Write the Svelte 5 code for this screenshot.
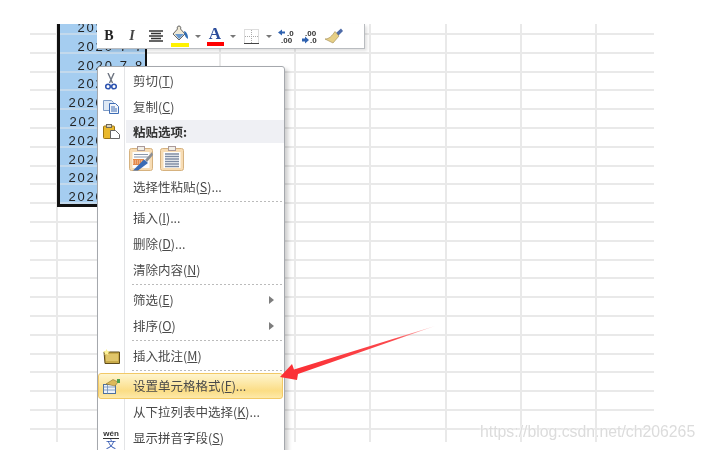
<script>
  const colWidths = [28, 88, 75, 75, 75, 76, 75, 75, 57];
  const rowHeights = [11, ...Array(21).fill(18.81), 12];
  const dates = ["2020-7-6", "2020-7-7", "2020-7-8", "2020-7-9", "2020-7-10", "2020-7-11", "2020-7-12", "2020-7-13", "2020-7-14", "2020-7-15"];
  const cells = [];
  rowHeights.forEach((_, r) => {
    colWidths.forEach((_, c) => {
      cells.push({
        key: r + "-" + c,
        text: c === 1 && r < 10 ? dates[r] : "",
        selected: c === 1 && r < 10,
        lastCol: c === colWidths.length - 1,
        lastRow: r === rowHeights.length - 1
      });
    });
  });
  const gridCols = colWidths.map((w) => w + "px").join(" ");
  const gridRows = rowHeights.map((h) => h + "px").join(" ");
</script>

<div class="page">
  <div class="sheet" style="grid-template-columns: {gridCols}; grid-template-rows: {gridRows}">
    {#each cells as cell (cell.key)}
      <div class="cell" class:selected={cell.selected} class:last-col={cell.lastCol} class:last-row={cell.lastRow}>
        {#if cell.text}<span>{cell.text}</span>{/if}
      </div>
    {/each}
    <div class="selection"></div>
  </div>

  <div class="toolbar">
    <span class="tool bold" style="width:24px">B</span>
    <span class="tool ital" style="width:22px">I</span>
    <span class="tool" style="width:25px">
      <svg width="16" height="13" viewBox="0 0 16 13"><path d="M1 1h14M3 3.500h10M1 6h14M3 8.500h10M1 11h14" stroke="#333" stroke-width="1.300" fill="none"/></svg>
    </span>
    <span class="tool" style="width:24px">
      <svg width="18" height="22" viewBox="0 0 18 22"><path d="M8 1 C6 1 6 3 6.500 4 L2 9 L8 15 L14 9 L9.500 4 C10 3 10 1 8 1z" fill="#efe9d6" stroke="#666"/><path d="M13 6c3 1 4 4 4 8-2-1-3-3-3.500-5z" fill="#2f6db5"/><path d="M4 9h9l-5 5z" fill="#6b9bd1"/><rect x="0" y="18" width="18" height="4" fill="#fff200"/></svg>
    </span>
    <span class="caret" style="width:12px"></span>
    <span class="tool font-a" style="width:22px">
      <span class="a">A</span><span class="bar"></span>
    </span>
    <span class="caret" style="width:13px"></span>
    <span class="tool" style="width:24px">
      <svg width="15" height="15" viewBox="0 0 15 15"><path d="M.5.5h14v14H.5z" fill="none" stroke="#bbb" stroke-dasharray="1 1"/><path d="M7.500 1v13M1 7.500h13" stroke="#aaa" stroke-dasharray="1 1"/><path d="M0 14.500h15" stroke="#444"/></svg>
    </span>
    <span class="caret" style="width:12px"></span>
    <span class="tool" style="width:22px">
      <svg width="17" height="15" viewBox="0 0 17 15"><path d="M0 3.500 L4 .5V2.500H7V4.500H4V6.500z" fill="#2f62b0"/><text x="9" y="6.500" class="num">.0</text><text x="3" y="14" class="num">.00</text></svg>
    </span>
    <span class="tool" style="width:24px">
      <svg width="17" height="15" viewBox="0 0 17 15"><text x="4" y="6.500" class="num">.00</text><path d="M1 9.500H4V7.500L8 11 4 14.500V12.500H1z" fill="#2f62b0"/><text x="9" y="14" class="num">.0</text></svg>
    </span>
    <span class="tool" style="width:24px">
      <svg width="19" height="16" viewBox="0 0 19 16"><path d="M12 5 L17 0.500 L19 3 L14 8z" fill="#4f6ca8"/><path d="M11 3.500 L15 8 L9 15 L1 11 C5 11 8 8 11 3.500z" fill="#e6cf86" stroke="#a08a50" stroke-width=".6"/></svg>
    </span>
  </div>

  <div class="menu">
    <div class="item">
      <span class="ico">
        <svg width="12" height="17" viewBox="0 0 12 17"><path d="M3 0 L7.500 10M9 0 L4.500 10" stroke="#6d7480" stroke-width="1.400" fill="none"/><circle cx="3" cy="13.500" r="2.300" fill="none" stroke="#2f55b0" stroke-width="1.600"/><circle cx="9" cy="13.500" r="2.300" fill="none" stroke="#2f55b0" stroke-width="1.600"/></svg>
      </span>
      <span class="label">剪切(<u>T</u>)</span>
    </div>
    <div class="item">
      <span class="ico">
        <svg width="16" height="14" viewBox="0 0 16 14"><path d="M.5.5h8l2 2v8H.5z" fill="#dfe9f5" stroke="#7f9cc6"/><path d="M6.500 3.500h6l3 3v7h-9z" fill="#f2f6fb" stroke="#3f6db5"/><path d="M8 7h4M8 9h6M8 11h6" stroke="#3f6db5"/></svg>
      </span>
      <span class="label">复制(<u>C</u>)</span>
    </div>
    <div class="item head">
      <span class="ico">
        <svg width="17" height="15" viewBox="0 0 17 15"><rect x=".5" y="2" width="11" height="12.500" rx="1" fill="#eab92d" stroke="#9b7414"/><rect x="3.500" y=".5" width="5" height="3" fill="#d9d2bd" stroke="#6f6a5a"/><path d="M7.500 6.500h5l4 4v4h-9z" fill="#fff" stroke="#666"/></svg>
      </span>
      <span class="label strong">粘贴选项:</span>
    </div>
    <div class="paste-row">
      <span class="paste">
        <svg width="24" height="25" viewBox="0 0 24 25"><rect x=".5" y="2.500" width="23" height="22" rx="2" fill="#f7dcb4" stroke="#d6b27f"/><rect x="8.500" y=".5" width="7" height="4" fill="#f1efe7" stroke="#a99"/><rect x="3.500" y="6" width="17" height="16" fill="#fdfdfd"/><path d="M5 8.500h14M5 11h14" stroke="#8a97ab"/><path d="M4 13h11v6H4z" fill="#e58a4a"/><path d="M4 15h11M4 17h11" stroke="#f7d6bc" stroke-dasharray="1 1"/><path d="M23 6 L16 14 L18 16 L24 9z" fill="#8b8f96"/><path d="M15 13.500 L19 17 L9 24.500 L4 24.500z" fill="#3b6cb5"/></svg>
      </span>
      <span class="paste">
        <svg width="24" height="25" viewBox="0 0 24 25"><rect x=".5" y="2.500" width="23" height="22" rx="2" fill="#f7dcb4" stroke="#d6b27f"/><rect x="8.500" y=".5" width="7" height="4" fill="#f1efe7" stroke="#a99"/><rect x="3.500" y="6" width="17" height="16" fill="#fdfdfd"/><path d="M5 8h14M5 10.500h14M5 13h14M5 15.500h14M5 18h14M5 20.500h14" stroke="#7d8ba3" stroke-width="1.300"/></svg>
      </span>
    </div>
    <div class="item">
      <span class="ico"></span>
      <span class="label">选择性粘贴(<u>S</u>)...</span>
    </div>
    <div class="sep first"></div>
    <div class="item">
      <span class="ico"></span>
      <span class="label">插入(<u>I</u>)...</span>
    </div>
    <div class="item">
      <span class="ico"></span>
      <span class="label">删除(<u>D</u>)...</span>
    </div>
    <div class="item">
      <span class="ico"></span>
      <span class="label">清除内容(<u>N</u>)</span>
    </div>
    <div class="sep"></div>
    <div class="item">
      <span class="ico"></span>
      <span class="label">筛选(<u>E</u>)</span>
      <span class="more"></span>
    </div>
    <div class="item">
      <span class="ico"></span>
      <span class="label">排序(<u>O</u>)</span>
      <span class="more"></span>
    </div>
    <div class="sep"></div>
    <div class="item">
      <span class="ico">
        <svg width="17" height="15" viewBox="0 0 17 15"><path d="M1 3h15.500v11.500H2z" fill="#c9ab4a" stroke="#5f4c1c"/><path d="M3 5h12v7H3z" fill="#e0c56a"/><path d="M3.500 0 L4.500 2 L7 2.500 L5 4 L5.500 6 L3.500 5 L1.500 6 L2 4 L0 2.500 L2.500 2z" fill="#fdf39a"/></svg>
      </span>
      <span class="label">插入批注(<u>M</u>)</span>
    </div>
    <div class="sep"></div>
    <div class="item active">
      <span class="ico">
        <svg width="17" height="15" viewBox="0 0 17 15"><rect x=".5" y="5.500" width="12" height="9" fill="#eef3fa" stroke="#4d6f9e"/><path d="M.5 8h12M.5 11h12M4.500 5.500v9" stroke="#6d8db8" stroke-width=".8"/><path d="M3 5 L10 .5 L15 3 L12 7z" fill="#dcb95a" stroke="#8a7330" stroke-width=".6"/><path d="M14 0h3v4h-3z" fill="#4ca04c"/></svg>
      </span>
      <span class="label">设置单元格格式(<u>F</u>)...</span>
    </div>
    <div class="item">
      <span class="ico"></span>
      <span class="label">从下拉列表中选择(<u>K</u>)...</span>
    </div>
    <div class="item">
      <span class="ico wen"><b>wén</b><i>文</i></span>
      <span class="label">显示拼音字段(<u>S</u>)</span>
    </div>
  </div>

  <svg class="arrow" width="160" height="60" viewBox="280 325 160 60">
    <defs>
      <linearGradient id="tail" gradientUnits="userSpaceOnUse" x1="300" y1="370" x2="435" y2="326">
        <stop offset="0" stop-color="#fb3036"/>
        <stop offset="0.7" stop-color="#fb4a4e"/>
        <stop offset="1" stop-color="#fdd5d5"/>
      </linearGradient>
    </defs>
    <path d="M280 377 L292 364 L294 369.500 L435 326 L298 374 L297 380z" fill="url(#tail)"/>
  </svg>

  <div class="mark">https://blog.csdn.net/ch206265</div>
</div>

<style>
  :global(body) {
    background: #fff;
  }

  .page {
    position: relative;
    width: 704px;
    height: 450px;
    box-sizing: border-box;
    padding: 24px 0 0 30px;
    overflow: hidden;
    background: #fff;
    filter: blur(0.45px);
    font-family: "Noto Sans CJK SC", "Liberation Sans", sans-serif;
  }

  .sheet {
    position: relative;
    display: grid;
    width: 624px;
    height: 419px;
    overflow: hidden;
  }

  .cell {
    box-sizing: border-box;
    border-right: 2px solid #e9e9e9;
    border-bottom: 2px solid #e9e9e9;
    display: flex;
    align-items: flex-end;
    justify-content: flex-end;
    overflow: hidden;
  }

  .cell.last-col {
    border-right: none;
  }

  .cell.last-row {
    border-bottom: none;
  }

  .cell.selected {
    background: #a5cdf0;
    border-bottom-color: #c3d9ec;
    border-right: none;
  }

  .cell span {
    font-family: "Liberation Sans", sans-serif;
    font-size: 13px;
    line-height: 13px;
    margin-bottom: -1px;
    letter-spacing: 1.8px;
    color: #222;
    padding-right: 2px;
    white-space: nowrap;
  }

  .selection {
    position: absolute;
    left: 27px;
    top: -8px;
    width: 90px;
    height: 191px;
    box-sizing: border-box;
    border-left: 3px solid #111;
    border-right: 2px solid #111;
    border-bottom: 3px solid #111;
  }

  .toolbar {
    position: absolute;
    left: 97px;
    top: 24px;
    width: 268px;
    height: 25px;
    display: flex;
    align-items: center;
    background: #fff;
    border-right: 1px solid #b9bcc0;
    border-bottom: 1px solid #b9bcc0;
    box-sizing: border-box;
    box-shadow: 2px 2px 3px rgba(0, 0, 0, 0.12);
  }

  .tool {
    display: flex;
    align-items: center;
    justify-content: center;
    flex: none;
    height: 24px;
  }

  .bold {
    font-family: "Liberation Serif", serif;
    font-weight: bold;
    font-size: 14px;
    color: #222;
  }

  .ital {
    font-family: "Liberation Serif", serif;
    font-weight: bold;
    font-style: italic;
    font-size: 14px;
    color: #444;
  }

  .font-a {
    flex-direction: column;
  }

  .font-a .a {
    font-family: "Liberation Serif", serif;
    font-weight: bold;
    font-size: 17px;
    line-height: 16px;
    color: #2b4c9b;
  }

  .font-a .bar {
    width: 17px;
    height: 4px;
    background: #f00;
  }

  .caret {
    flex: none;
    display: flex;
    justify-content: center;
  }

  .caret::before {
    content: "";
    border-left: 3px solid transparent;
    border-right: 3px solid transparent;
    border-top: 3px solid #777;
  }

  .num {
    font-family: "Liberation Sans", sans-serif;
    font-size: 8px;
    font-weight: bold;
    fill: #333;
  }

  .menu {
    position: absolute;
    left: 97px;
    top: 66px;
    width: 188px;
    height: 392px;
    box-sizing: border-box;
    padding-top: 1px;
    background: linear-gradient(90deg, #fff 26px, #e3e4e6 26px, #e3e4e6 27px, #fff 27px);
    border: 1px solid #a5a8ad;
    border-radius: 3px;
    box-shadow: 3px 3px 4px rgba(0, 0, 0, 0.2);
  }

  .item {
    display: flex;
    align-items: center;
    height: 26px;
    position: relative;
  }

  .ico {
    flex: none;
    width: 26px;
    display: flex;
    align-items: center;
    justify-content: center;
  }

  .label {
    margin-left: 9px;
    font-size: 12.5px;
    line-height: 16px;
    color: #4a4a4a;
    white-space: nowrap;
  }

  .label u {
    text-underline-offset: 1px;
  }

  .strong {
    font-weight: bold;
    color: #333;
  }

  .head {
    height: 23px;
    background: linear-gradient(90deg, transparent 28px, #eff0f4 28px);
  }

  .paste-row {
    display: flex;
    gap: 7px;
    height: 31px;
    padding: 3px 0 0 31px;
    box-sizing: border-box;
  }

  .paste {
    display: block;
    height: 25px;
  }

  .sep {
    height: 4px;
    margin-left: 34px;
    margin-right: 1px;
    background: linear-gradient(90deg, #bbb 50%, transparent 50%) 0 1px / 4px 1px repeat-x;
  }

  .sep.first {
    height: 5px;
  }

  .more {
    position: absolute;
    left: 171px;
    top: 9px;
    border-left: 5px solid #7d7d7d;
    border-top: 4px solid transparent;
    border-bottom: 4px solid transparent;
  }

  .active {
    margin-right: 1px;
    box-sizing: border-box;
    background: linear-gradient(#fef5cf, #fbdd85 70%, #fde9a9);
    border: 1px solid #f2c966;
    border-radius: 3px;
  }

  .active .ico {
    width: 25px;
  }

  .wen {
    flex-direction: column;
    line-height: 9px;
  }

  .wen b {
    font-family: "Liberation Sans", sans-serif;
    font-size: 8px;
    color: #333;
    border-bottom: 1px solid #333;
  }

  .wen i {
    font-style: normal;
    font-size: 10px;
    color: #2f55b0;
  }

  .arrow {
    position: absolute;
    left: 280px;
    top: 325px;
  }

  .mark {
    position: absolute;
    left: 480px;
    top: 423px;
    font-family: "Liberation Sans", sans-serif;
    font-size: 15.8px;
    line-height: 18px;
    color: #dcdcdc;
    white-space: nowrap;
    text-shadow: 0 0 2px #fff, 0 0 2px #fff;
  }
</style>
